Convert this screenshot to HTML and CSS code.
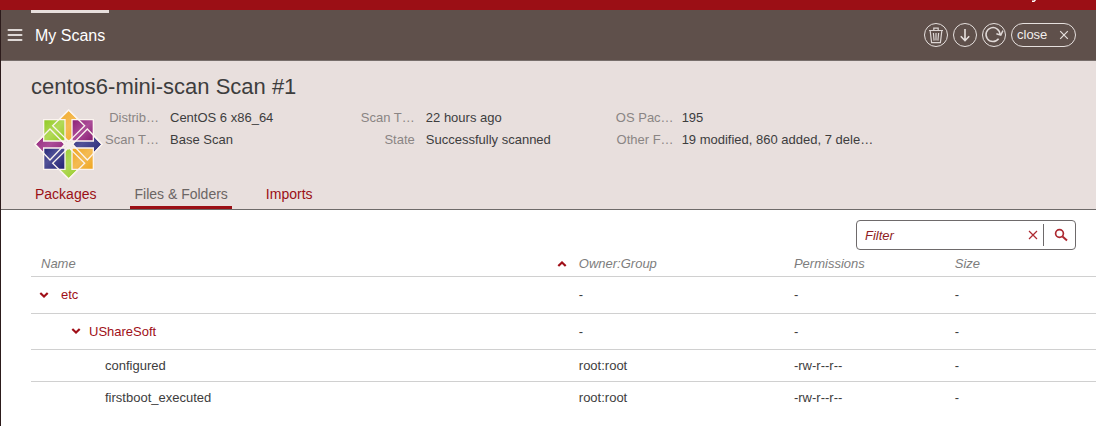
FILE: index.html
```html
<!DOCTYPE html>
<html lang="en">
<head>
<meta charset="utf-8">
<title>My Scans</title>
<link rel="stylesheet" href="styles.css">
</head>
<body>
<div class="topbar"><svg class="topbar-mark" width="6" height="2" viewBox="0 0 6 2" aria-hidden="true"><path d="M1 1.2h2L4.5 0" fill="none" stroke="#fff" stroke-width="1.4"/></svg></div>
<div class="app">
  <header class="header">
    <button class="menu" aria-label="Menu">
      <svg width="16" height="14" viewBox="0 0 16 14"><path d="M1.500 2h13M1.500 7h13M1.500 12h13" stroke="#ded8d6" stroke-width="2" stroke-linecap="round"/></svg>
    </button>
    <a class="crumb" href="#">My Scans</a>
    <div class="actions">
      <button class="round" aria-label="Delete">
        <svg width="22" height="22" viewBox="0 0 22 22" fill="none" stroke="#ddd6d4" stroke-width="1.200"><path d="M4 6.500h14M8.800 6V4.200h4.400V6M5.200 7l1.400 11.600h8.800L16.800 7M8.400 9l.7 7.600M11 9v7.600M13.600 9l-.7 7.600"/></svg>
      </button>
      <button class="round" aria-label="Download">
        <svg width="22" height="22" viewBox="0 0 22 22" fill="none" stroke="#e6e0de" stroke-width="1.600"><path d="M11 5v11.500M6.800 12.300L11 16.700l4.200-4.400"/></svg>
      </button>
      <button class="round" aria-label="Refresh">
        <svg width="22" height="22" viewBox="0 0 22 22" fill="none" stroke="#e0d9d7" stroke-width="1.500"><path d="M15.600 14.800A7 7 0 1 1 17 10.800M13.400 9.700l4.400 1.400 2.200-4.600"/></svg>
      </button>
      <button class="close">close
        <svg width="10" height="10" viewBox="0 0 10 10" stroke="#e6e0de" stroke-width="1.200"><path d="M1.200 1.200l7.600 7.600M8.800 1.200L1.200 8.800"/></svg>
      </button>
    </div>
  </header>

  <section class="summary">
    <h1 class="title">centos6-mini-scan Scan #1</h1>
    <div class="overview">
      <svg class="logo" width="69" height="71" viewBox="42 27 207 213" role="img" aria-label="CentOS">
        <defs>
          <linearGradient id="g" x2="1" y2="1"><stop stop-color="#8fca22"/><stop offset=".5" stop-color="#b2d958"/><stop offset="1" stop-color="#91c91f"/></linearGradient>
          <linearGradient id="p" x2="1" y2="1"><stop stop-color="#8d1f76"/><stop offset=".5" stop-color="#ab4c98"/><stop offset="1" stop-color="#861a70"/></linearGradient>
          <linearGradient id="b" x2="1" y2="1"><stop stop-color="#242675"/><stop offset=".4" stop-color="#515197"/><stop offset="1" stop-color="#211f70"/></linearGradient>
          <linearGradient id="o" x2="1" y2="1"><stop stop-color="#efa51e"/><stop offset=".5" stop-color="#f4bb55"/><stop offset="1" stop-color="#efa51c"/></linearGradient>
        </defs>
        <g stroke="#fbf4ef" stroke-width="4">
          <path fill="url(#o)" d="M146 30l48 47-48 48-48-48z"/>
          <path fill="url(#p)" d="M45 133l45-46 45 46-45 47z"/>
          <path fill="url(#b)" d="M246 133l-44-46-45 46 45 47z"/>
          <path fill="url(#g)" d="M146 237l48-47-48-48-48 48z"/>
          <path fill="url(#g)" d="M71 59h64v64H71z"/>
          <path fill="url(#p)" d="M156 59h64v64h-64z"/>
          <path fill="url(#b)" d="M71 144h64v64H71z"/>
          <path fill="url(#o)" d="M156 144h64v64h-64z"/>
          <g fill="none">
            <path d="M146 30l48 47-48 48-48-48zM45 133l45-46 45 46-45 47zM246 133l-44-46-45 46 45 47zM146 237l48-47-48-48-48 48z"/>
          </g>
        </g>
        <path d="M146 119l5 8 9-4-4 9 7 2-7 3 4 9-9-4-5 8-5-8-9 4 4-9-7-3 7-2-4-9 9 4z" fill="#f4eeea"/>
      </svg>
      <div class="facts">
        <dl class="fact-group">
          <dt>Distrib…</dt><dd>CentOS 6 x86_64</dd>
          <dt>Scan T…</dt><dd>Base Scan</dd>
        </dl>
        <dl class="fact-group">
          <dt>Scan T…</dt><dd>22 hours ago</dd>
          <dt>State</dt><dd>Successfully scanned</dd>
        </dl>
        <dl class="fact-group wide">
          <dt>OS Pac…</dt><dd>195</dd>
          <dt>Other F…</dt><dd>19 modified, 860 added, 7 dele…</dd>
        </dl>
      </div>
    </div>
    <nav class="tabs">
      <a class="tab" href="#">Packages</a>
      <a class="tab active" href="#" aria-current="page">Files &amp; Folders</a>
      <a class="tab" href="#">Imports</a>
    </nav>
  </section>

  <main class="content">
    <form class="filter">
      <input class="filter-input" type="text" placeholder="Filter" aria-label="Filter">
      <button class="filter-clear" type="reset" aria-label="Clear">
        <svg width="10" height="10" viewBox="0 0 10 10" stroke="#ad2930" stroke-width="1.200"><path d="M1 1l8 8M9 1L1 9"/></svg>
      </button>
      <button class="filter-search" type="submit" aria-label="Search">
        <svg width="14" height="14" viewBox="0 0 14 14" fill="none" stroke="#ad2930"><circle cx="5.500" cy="5.500" r="3.900" stroke-width="1.700"/><path d="M8.500 8.500l4.500 4" stroke-width="2"/></svg>
      </button>
    </form>
    <table class="files">
      <colgroup><col class="c-name"><col class="c-owner"><col class="c-perm"><col></colgroup>
      <thead>
        <tr>
          <th><span class="sortable">Name <svg width="10" height="7" viewBox="0 0 10 7" fill="none" stroke="#a00f18" stroke-width="2.200"><path d="M1.300 5L5 1.500 8.700 5"/></svg></span></th>
          <th>Owner:Group</th><th>Permissions</th><th>Size</th>
        </tr>
      </thead>
      <tbody>
        <tr class="folder">
          <td><button class="node"><svg width="10" height="7" viewBox="0 0 10 7" fill="none" stroke="#a00f18" stroke-width="2.200"><path d="M1.300 1L5 4.500 8.700 1"/></svg>etc</button></td>
          <td>-</td><td>-</td><td>-</td>
        </tr>
        <tr class="folder child">
          <td><button class="node"><svg width="10" height="7" viewBox="0 0 10 7" fill="none" stroke="#a00f18" stroke-width="2.200"><path d="M1.300 1L5 4.500 8.700 1"/></svg>UShareSoft</button></td>
          <td>-</td><td>-</td><td>-</td>
        </tr>
        <tr class="file"><td>configured</td><td>root:root</td><td>-rw-r--r--</td><td>-</td></tr>
        <tr class="file"><td>firstboot_executed</td><td>root:root</td><td>-rw-r--r--</td><td>-</td></tr>
      </tbody>
    </table>
  </main>
</div>
</body>
</html>
```
FILE: styles.css
```css
* { box-sizing: border-box; }
body {
  margin: 0;
  min-height: 100vh;
  display: flex;
  flex-direction: column;
  background: #fff;
  color: #3d3d3d;
  font: 13px/22px "Liberation Sans", Arial, sans-serif;
}
button, input { font: inherit; color: inherit; background: none; border: 0; padding: 0; margin: 0; }
button { cursor: pointer; }
svg { display: block; flex: none; }
a { text-decoration: none; }

.topbar { height: 10px; background: #9b0f15; display: flex; justify-content: flex-end; padding-right: 59px; }
.app { flex: 1; border-left: 1px solid #2c1b1b; }

.header {
  display: flex;
  height: 51px;
  padding: 0 20px 0 6px;
  background: #5f504b;
  border-bottom: 1px solid #776e6b;
}
.menu { width: 24px; }
.crumb {
  padding: 0 4px;
  border-top: 3px solid #e8dfdd;
  color: #fff;
  font-size: 16px;
  line-height: 46px;
}
.actions { display: flex; align-items: center; gap: 5px; margin-left: auto; color: #f2eeec; }
.round { width: 24px; height: 24px; border: 1px solid #e6e0de; border-radius: 50%; }
.close {
  display: flex;
  align-items: center;
  justify-content: space-between;
  width: 65px;
  height: 24px;
  padding: 0 6px 0 5px;
  border: 1px solid #e6e0de;
  border-radius: 12px;
}

.summary { padding: 12px 20px 0 30px; background: #e8dfdd; border-bottom: 1px solid #6e6a69; }
.title { margin: 0; font-size: 22px; font-weight: 400; line-height: 28px; }
.overview { display: flex; }
.logo { margin: 8px 0 0 3px; }
.facts {
  display: grid;
  grid-template-columns: repeat(3, 1fr);
  width: 73.7%;
  padding-top: 6px;
}
.fact-group {
  display: grid;
  grid-template-columns: 56px 1fr;
  align-content: start;
  column-gap: 11px;
  margin: 0;
  white-space: nowrap;
}
.fact-group.wide { grid-template-columns: 59px 1fr; column-gap: 8px; }
.fact-group dt { text-align: right; color: #8a8584; }
.fact-group dd { margin: 0; }

.tabs { display: flex; gap: 30px; }
.tab { padding: 2px 4px 0; border-bottom: 3px solid transparent; color: #9b0f15; font-size: 14px; line-height: 24px; }
.tab.active { color: #6b6564; border-color: #9b0f15; }

.content { padding: 10px 0 0 30px; }
.filter {
  display: flex;
  align-items: center;
  width: 220px;
  height: 30px;
  margin: 0 20px 0 auto;
  border: 1px solid #6e6a6b;
  border-radius: 4px;
}
.filter-input { flex: 1; min-width: 0; padding: 2px 0 0 8px; font-style: italic; outline: 0; }
.filter-input::placeholder { color: #8e1c23; opacity: 1; }
.filter-clear { padding-right: 5px; }
.filter-search { padding: 4px 7px 4px 10px; border-left: 1px solid #6e6a6b; }

.files { width: 100%; table-layout: fixed; border-collapse: separate; border-spacing: 0; }
.c-name { width: 50.5%; }
.c-owner { width: 20.2%; }
.c-perm { width: 15.1%; }
.files th, .files td { padding: 0 10px; border-bottom: 1px solid #d0d0d0; text-align: left; }
.files th { height: 27px; padding: 2px 2px 0 10px; color: #7d7d7d; font-weight: 400; font-style: italic; }
.sortable { display: flex; justify-content: space-between; align-items: center; }
.folder td { height: 37px; }
.child td { height: 36px; }
.file td { height: 32px; }
.file:last-child td { border-bottom: 0; }
.folder td:first-child { padding-left: 8px; }
.child td:first-child { padding-left: 40px; }
.file td:first-child { padding-left: 74px; }
.node { display: flex; align-items: center; gap: 12px; color: #a00f18; }
.child .node { gap: 8px; }
```
